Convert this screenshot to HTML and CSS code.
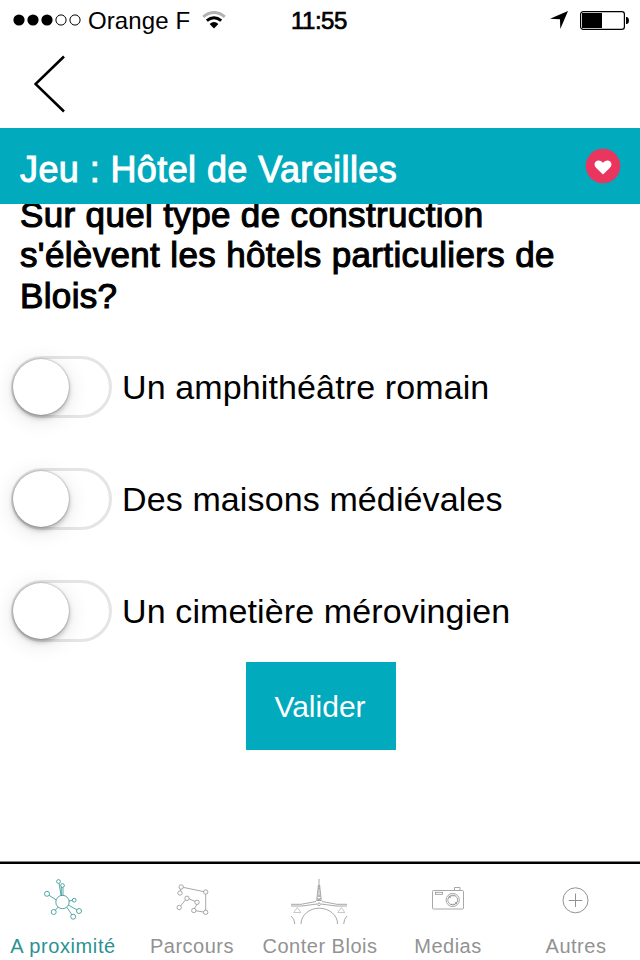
FILE: index.html
```html
<!DOCTYPE html>
<html lang="fr">
  <head>
    <meta charset="UTF-8" />
    <meta name="viewport" content="width=device-width, initial-scale=1.0" />
    <title>Jeu</title>
    <link rel="stylesheet" href="styles.css">
  </head>
  <body>
    <div class="status-bar">
      <div class="carrier">
        <svg class="signal" width="68" height="12" viewBox="0 0 68 12">
          <circle cx="6" cy="6" r="5.6" />
          <circle cx="20" cy="6" r="5.6" />
          <circle cx="34" cy="6" r="5.6" />
          <circle class="empty" cx="48" cy="6" r="5.1" />
          <circle class="empty" cx="62" cy="6" r="5.1" />
        </svg>
        <span>Orange F</span>
        <svg class="wifi" width="24" height="18" viewBox="0 0 24 18">
          <path class="weak" d="M1.2 5.8Q12 -2.8 22.8 5.8" />
          <path d="M4.8 9.7Q12 3.9 19.2 9.7" />
          <path class="dot" d="M7.6 12.9Q12 9.3 16.4 12.9L12 17.4Z" />
        </svg>
      </div>
      <span class="time">11:55</span>
      <div class="indicators">
        <svg width="18" height="18" viewBox="0 0 18 18">
          <path d="M18 0L10.3 18L10 8.3L0 7.7Z" />
        </svg>
        <svg width="49" height="19" viewBox="0 0 49 19">
          <rect class="battery" x="0.6" y="0.6" width="43.8" height="17.8" rx="2.6" />
          <rect x="2" y="2" width="20" height="15" />
          <path d="M46 6H47Q49 6.5 49 9.5T47 13H46Z" />
        </svg>
      </div>
    </div>
    <header class="nav-bar">
      <svg width="32" height="58" viewBox="0 0 32 58">
        <path d="M30 1.5L1.5 29L30 56.5" />
      </svg>
    </header>
    <div class="title-bar">
      <h1>Jeu : Hôtel de Vareilles</h1>
      <svg width="36" height="36" viewBox="0 0 36 36">
        <circle cx="18" cy="18" r="17.3" />
        <path d="M18 26.5L11.3 20.1Q8.2 16.8 10.5 13.8Q14 10.6 18 14.8Q22 10.6 25.5 13.8Q27.8 16.8 24.7 20.1Z" />
      </svg>
    </div>
    <main>
      <h2>Sur quel type de construction<br />s'élèvent les hôtels particuliers de<br />Blois?</h2>
      <div class="answers">
        <label class="answer"><span class="toggle"></span>Un amphithéâtre romain</label>
        <label class="answer"><span class="toggle"></span>Des maisons médiévales</label>
        <label class="answer"><span class="toggle"></span>Un cimetière mérovingien</label>
      </div>
      <button class="submit" type="button">Valider</button>
    </main>
    <nav class="tab-bar">
      <div class="tab active">
        <svg width="60" height="48" viewBox="0 0 60 48">
          <circle cx="29.5" cy="26" r="6.7" />
          <circle cx="25.5" cy="5.5" r="1.9" />
          <circle cx="29.5" cy="9.5" r="1.9" />
          <circle cx="14" cy="17.8" r="2.5" />
          <circle cx="41.2" cy="24.2" r="1.9" />
          <circle cx="20.7" cy="36" r="2.5" />
          <circle cx="46" cy="35" r="2.5" />
          <circle cx="40.2" cy="40.7" r="2.5" />
          <path d="M26 7.5L28.2 19.5M30 11.5V19.5M28.3 11V19.5M16 19.3L23.3 24M36 25L39.4 24.4M22.3 34.2L25 31.2M35.4 29L43.8 33.8M33.8 31.2L38.8 38.6" />
        </svg>
        <span>A proximité</span>
      </div>
      <div class="tab">
        <svg width="60" height="48" viewBox="0 0 60 48">
          <circle cx="20.2" cy="11" r="2.2" />
          <circle cx="19" cy="17" r="2.2" />
          <circle cx="44.7" cy="16" r="2.2" />
          <circle cx="44.7" cy="36.3" r="2.2" />
          <circle cx="32.8" cy="34.5" r="2.2" />
          <circle cx="36" cy="26.3" r="2.2" />
          <circle cx="26" cy="22.3" r="2.2" />
          <circle cx="18.2" cy="31.5" r="2.2" />
          <path d="M19.7 13.2L19.4 14.8M22.4 11.4L42.5 15.6M44.7 18.2V34.1M42.5 36L35 34.8M33.3 32.4L36 28.5M34 25.3L28.2 23M24.5 24L19.7 29.8" />
        </svg>
        <span>Parcours</span>
      </div>
      <div class="tab">
        <svg class="bridge" width="60" height="48" viewBox="0 0 60 48">
          <path d="M2 28.3H12L27 25.5M2 30H13L28 28M58 28.3H48L33 25.5M58 30H47L32 28" />
          <path d="M30 3V13M29.4 9L27.7 24.5M30.6 9L32.3 24.5M30 12V21M28.4 20H31.6M27.5 24.5H32.5M28 22L32 24.5M32 22L28 24.5" />
          <circle cx="30" cy="28.3" r="1.4" />
          <path d="M12 48A18.3 15.8 0 0 1 48.6 48M2 40Q5.5 42.5 5.8 48M58 40Q55 42.5 54.7 48" />
          <path class="thin" d="M8.3 31.5L11.8 36.5H4.8ZM52.3 31.5L55.8 36.5H48.8Z" />
        </svg>
        <span>Conter Blois</span>
      </div>
      <div class="tab">
        <svg width="60" height="48" viewBox="0 0 60 48">
          <rect x="15.5" y="14.5" width="31" height="18.5" rx="1" />
          <path d="M37.5 14.5V11.5H43V14.5" />
          <rect x="18.5" y="16.3" width="7" height="2" />
          <circle cx="35.7" cy="24" r="6.6" />
          <circle cx="35.7" cy="24" r="4.9" />
          <path d="M31 22.5Q34 18.5 38.3 19.8M40.5 25.5Q38 29.5 33.5 28.4M31.5 20L34 22M40 28L37.8 26" />
        </svg>
        <span>Medias</span>
      </div>
      <div class="tab">
        <svg class="more" width="60" height="48" viewBox="0 0 60 48">
          <circle cx="30.5" cy="24.3" r="12.5" />
          <path d="M23.7 24.5H37.3M30.5 17.5V31" />
        </svg>
        <span>Autres</span>
      </div>
    </nav>
  </body>
</html>
```

FILE: styles.css
```css
body {
  margin: 0;
  height: 960px;
  display: flex;
  flex-direction: column;
  overflow: hidden;
  background-color: #fff;
  color: #000;
  font-family: "Liberation Sans", Arial, sans-serif;
}
svg {
  display: block;
  flex-shrink: 0;
}
.status-bar {
  height: 40px;
  display: grid;
  grid-template-columns: 291px 1fr auto;
  box-sizing: border-box;
  padding-right: 11px;
  align-items: center;
  font-size: 24px;
}
.carrier {
  display: flex;
  align-items: center;
  padding-left: 13px;
}
.carrier span {
  margin: 2px 12px 0 7px;
  letter-spacing: 0.1px;
}
.signal .empty {
  fill: none;
  stroke: #000;
}
.wifi {
  fill: none;
  stroke: #000;
  stroke-width: 3;
}
.wifi .weak {
  stroke: #b3b3b3;
}
.wifi .dot {
  fill: #000;
  stroke: none;
}
.time {
  margin-top: 2px;
  letter-spacing: -0.5px;
  -webkit-text-stroke: 0.7px #000;
}
.indicators {
  display: flex;
  align-items: center;
  gap: 12px;
}
.battery {
  fill: none;
  stroke: #000;
  stroke-width: 1.2;
}
.nav-bar {
  height: 88px;
  box-sizing: border-box;
  padding: 15px 34px;
}
.nav-bar path {
  fill: none;
  stroke: #000;
  stroke-width: 2.6;
}
.title-bar {
  height: 76px;
  box-sizing: border-box;
  padding: 0 19px 0 20px;
  display: flex;
  justify-content: space-between;
  align-items: center;
  background-color: #02aabd;
}
.title-bar h1 {
  margin: 8px 0 0;
  color: #fff;
  font-size: 36px;
  font-weight: normal;
  letter-spacing: 0.4px;
  -webkit-text-stroke: 1px #fff;
}
.title-bar circle {
  fill: #ea355f;
}
.title-bar path {
  fill: #fff;
}
main {
  flex: 1;
  overflow: hidden;
  display: flex;
  flex-direction: column;
}
/* first line slides under the title bar */
h2 {
  margin: -9px 0 0 20px;
  font-size: 35px;
  font-weight: normal;
  line-height: 40.4px;
  letter-spacing: 0.35px;
  white-space: nowrap;
  -webkit-text-stroke: 1.1px #000;
}
.answers {
  display: flex;
  flex-direction: column;
  gap: 50px;
  margin: 40px 0 0 11px;
}
.answer {
  height: 62px;
  display: flex;
  align-items: center;
  gap: 10px;
  font-size: 34px;
  letter-spacing: 0.12px;
}
.toggle {
  width: 101px;
  height: 62px;
  box-sizing: border-box;
  border: 3px solid #e5e5e5;
  border-radius: 31px;
}
.toggle::before {
  content: "";
  display: block;
  width: 56px;
  height: 56px;
  margin-left: -1px;
  border-radius: 50%;
  background-color: #fff;
  box-shadow: 0 0 2px rgba(0, 0, 0, 0.4), 0 3px 5px rgba(0, 0, 0, 0.25), 0 4px 22px rgba(0, 0, 0, 0.12);
}
.submit {
  width: 150px;
  height: 88px;
  margin: 20px 0 0 246px;
  padding: 2px 2px 0 0;
  border: none;
  background-color: #02aabd;
  color: #fff;
  font-family: inherit;
  font-size: 30px;
}
.tab-bar {
  height: 98px;
  box-sizing: border-box;
  display: grid;
  grid-template-columns: repeat(5, 128px);
  border-top: 2px solid #000;
  box-shadow: 0 -1px 0 #858585;
}
.tab {
  display: flex;
  flex-direction: column;
  align-items: center;
  padding-top: 12px;
  color: #929292;
  font-size: 20px;
  letter-spacing: 0.5px;
}
.tab span {
  margin-top: 11px;
  white-space: nowrap;
}
.tab svg {
  margin-right: 2px;
  fill: none;
  stroke: currentColor;
  stroke-width: 0.8;
}
.tab.active {
  color: #2b9292;
}
.tab.active span {
  margin-right: 2px;
  letter-spacing: 0.6px;
}
.bridge {
  stroke-width: 1.1;
}
.bridge .thin {
  stroke-width: 0.5;
}
.tab .more {
  stroke-width: 1;
}
```
